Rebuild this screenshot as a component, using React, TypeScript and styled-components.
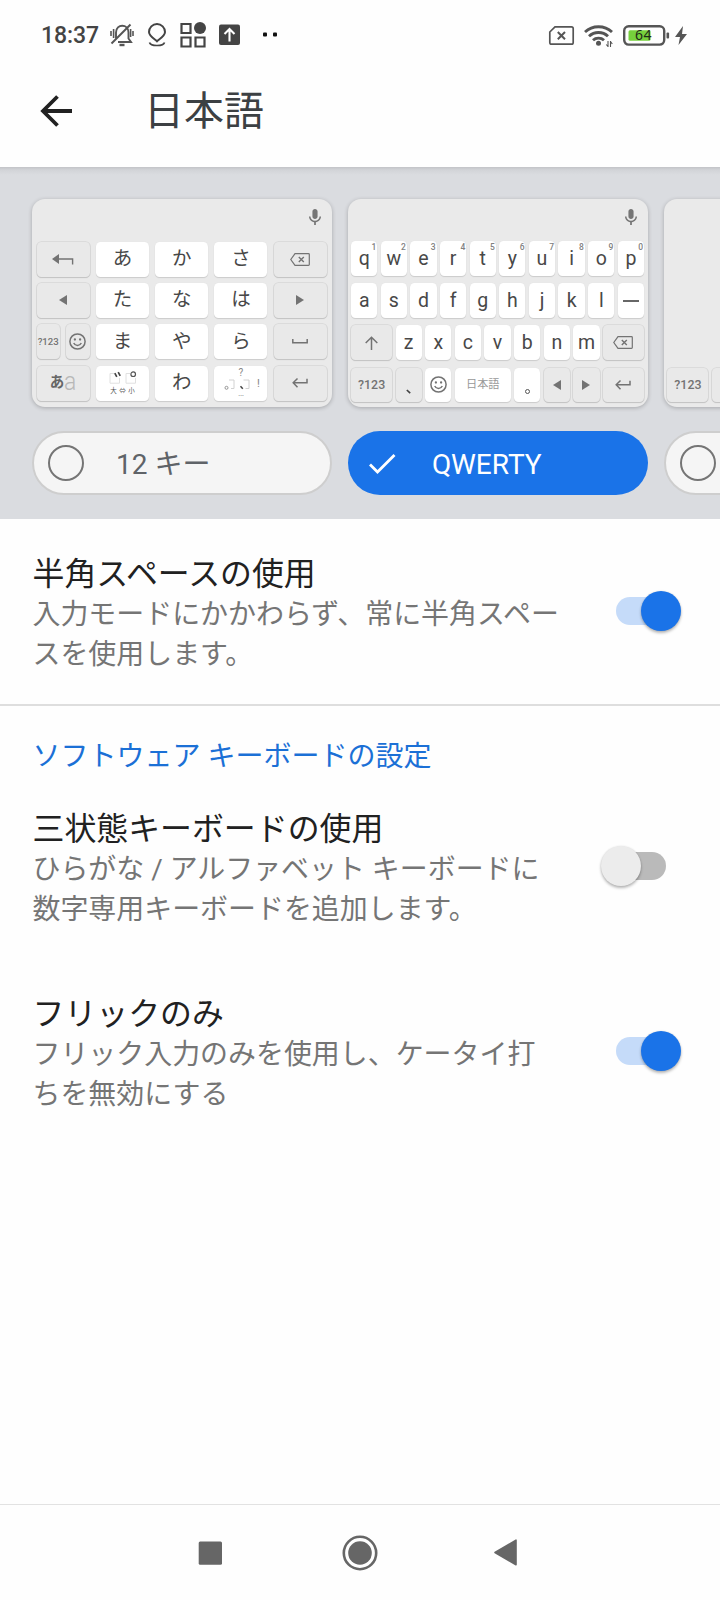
import React from "react";
import styled, { createGlobalStyle, css } from "styled-components";

const Global = createGlobalStyle`
  * { box-sizing: border-box; }
  body { margin: 0; background: #fff; font-family: Roboto, "Noto Sans CJK JP", sans-serif; }
`;

const Screen = styled.div`
  width: 720px;
  height: 1600px;
  background: #fefefe;
  display: flex;
  flex-direction: column;
  overflow: hidden;
`;

const StatusBar = styled.div`
  height: 70px;
  flex: none;
  display: flex;
  justify-content: space-between;
  padding: 0 33px 0 41px;
`;

const StatusGroup = styled.div`
  display: flex;
  align-items: center;
  height: 70px;
`;

const Clock = styled.span`
  width: 69px;
  font-size: 23px;
  line-height: 70px;
  padding-top: 1px;
  font-weight: 500;
  color: #444;
  letter-spacing: -0.1px;
`;

const Header = styled.header`
  height: 97px;
  flex: none;
  display: flex;
  align-items: center;
  padding: 0 0 15px 40px;
  background: #fefefe;
`;

const Title = styled.h1`
  margin: 0 0 0 71px;
  padding-top: 2px;
  font-size: 40px;
  line-height: 56px;
  font-weight: 400;
  color: #3c4043;
`;

const LayoutPanel = styled.section`
  height: 352px;
  flex: none;
  padding: 32px 0 0 32px;
  background: linear-gradient(#c2c3c7 0, #d2d4d8 3px, #dadce0 8px);
  display: flex;
  gap: 16px;
  overflow: hidden;
`;

const LayoutOption = styled.div`
  width: 300px;
  flex: none;
  display: flex;
  flex-direction: column;
  gap: 24px;
`;

const Keyboard = styled.div`
  height: 208px;
  border-radius: 13px;
  background: #eaeaea;
  box-shadow: 0 1px 4px rgba(0, 0, 0, 0.24);
  display: flex;
  flex-direction: column;
`;

const Suggestions = styled.div`
  height: 42px;
  flex: none;
  display: flex;
  justify-content: flex-end;
  padding: 10px 11px 0 0;
`;

const FlickGrid = styled.div`
  display: grid;
  grid-template-columns: repeat(5, 53px);
  grid-auto-rows: 35px;
  gap: 6.4px 6.3px;
  padding: 0.6px 4.6px 0;
`;

const SplitCell = styled.div`
  display: grid;
  grid-template-columns: 1fr 1fr;
  gap: 6.6px;
`;

const QwertyGrid = styled.div`
  display: grid;
  grid-template-columns: repeat(20, 1fr);
  grid-auto-rows: 34.8px;
  row-gap: 7.3px;
  padding: 0.3px 2.3px 0 1.4px;
`;

const Key = styled.div<{ $fn?: boolean; $span?: number; $size?: number; $weight?: number; $color?: string }>`
  position: relative;
  min-width: 0;
  display: flex;
  align-items: center;
  justify-content: center;
  border-radius: 4.5px;
  font-size: ${p => p.$size ?? 19.5}px;
  font-weight: ${p => p.$weight ?? 400};
  line-height: 20px;
  white-space: nowrap;
  color: ${p => p.$color ?? "#484848"};
  ${p => p.$span && css`grid-column: span ${p.$span}; margin: 0 1.7px;`}
  ${p => p.$fn
    ? css`background: #e9e9e9; box-shadow: 0 1px 1px #c3c3c3, 0 0 0 0.8px #d6d6d6;`
    : css`background: #fff; box-shadow: 0 1px 1px #cbcbcb, 0 0 1px #dedede;`}
`;

const Hint = styled.span`
  position: absolute;
  top: 2px;
  right: 1px;
  font-size: 8.5px;
  line-height: 8px;
  font-weight: 500;
  color: #808080;
`;

const Faded = styled.span`
  font-weight: 300;
  font-size: 26px;
  line-height: 20px;
  padding-bottom: 5px;
  transform: scaleX(0.88);
  transform-origin: left;
  margin-right: -2px;
  color: #b8b8b8;
`;

const Pill = styled.div<{ $on?: boolean }>`
  height: 64px;
  border-radius: 32px;
  border: ${p => (p.$on ? "0" : "2px solid #cecece")};
  background: ${p => (p.$on ? "#1a73e8" : "#f5f5f5")};
  color: ${p => (p.$on ? "#fff" : "#5f6368")};
  padding-left: ${p => (p.$on ? 16 : 13)}px;
  display: flex;
  align-items: center;
  font-size: 28px;
`;

const PillLabel = styled.span<{ $gap: number }>`
  margin-left: ${p => p.$gap}px;
  line-height: 40px;
  padding-top: 3px;
`;

const Setting = styled.div<{ $top: number; $height: number; $off?: boolean }>`
  height: ${p => p.$height}px;
  flex: none;
  display: flex;
  justify-content: space-between;
  padding: ${p => p.$top}px ${p => (p.$off ? 54 : 39)}px 0 32.5px;
`;

const SettingText = styled.div`
  display: flex;
  flex-direction: column;
`;

const SettingTitle = styled.div`
  font-size: 31.9px;
  line-height: 38px;
  padding-bottom: 2px;
  color: #212121;
`;

const SettingBody = styled.div`
  font-size: 27.95px;
  line-height: 40px;
  color: #757575;
  white-space: nowrap;
`;

const Switch = styled.div<{ $on?: boolean }>`
  margin: 42px 0 0;
  width: 65px;
  height: 28px;
  flex: none;
  display: flex;
  align-items: center;
  justify-content: ${p => (p.$on ? "flex-end" : "flex-start")};
  border-radius: 14px;
  background: ${p => (p.$on ? "linear-gradient(90deg,#c5dbf9 50px,transparent 50px)" : "linear-gradient(90deg,transparent 15px,#bababa 15px)")};
`;

const Thumb = styled.div<{ $on?: boolean }>`
  width: 40px;
  height: 40px;
  border-radius: 50%;
  background: ${p => (p.$on ? "#1a73e8" : "#ececec")};
  box-shadow: 0 2px 3px rgba(0, 0, 0, 0.28), 0 0 2px rgba(0, 0, 0, 0.1);
`;

const Divider = styled.div`
  height: 2px;
  flex: none;
  background: #dedede;
`;

const SectionTitle = styled.h2`
  height: 72px;
  flex: none;
  margin: 0;
  padding: 31px 0 0 32.5px;
  font-size: 28px;
  line-height: 40px;
  font-weight: 400;
  color: #1b70d6;
`;

const NavBar = styled.nav`
  margin-top: auto;
  height: 96px;
  flex: none;
  border-top: 1px solid #e2e2e2;
  display: flex;
  align-items: center;
  padding: 0 0 0 198px;
`;

const Icon = styled.svg<{ $ml?: number }>`
  display: block;
  flex: none;
  overflow: visible;
  margin-left: ${p => p.$ml ?? 0}px;
`;

const G = "#737373";

const Mic = () => (
  <Icon width="12" height="16" viewBox="5 2 14 19" preserveAspectRatio="none" fill="#757575">
    <path d="M12 14c1.66 0 3-1.34 3-3V5c0-1.66-1.34-3-3-3S9 3.34 9 5v6c0 1.66 1.34 3 3 3zm5.3-3c0 3-2.54 5.1-5.3 5.1S6.7 14 6.7 11H5c0 3.41 2.72 6.23 6 6.72V21h2v-3.28c3.28-.48 6-3.3 6-6.72h-1.7z" />
  </Icon>
);
const Smile = () => (
  <Icon width="17" height="17" viewBox="0 0 17 17" fill="none" stroke={G} strokeWidth="1.5">
    <circle cx="8.5" cy="8.5" r="7.6" />
    <path d="M4.7 10c1.5 3.2 6.1 3.2 7.6 0" />
    <g fill={G} stroke="none"><circle cx="5.9" cy="6.5" r="1.15" /><circle cx="11.1" cy="6.5" r="1.15" /></g>
  </Icon>
);
const Backspace = () => (
  <Icon width="20" height="13" viewBox="0 0 20 13" fill="none" stroke={G} strokeWidth="1.2">
    <path d="M5 .7h13.5q.8 0 .8.8v10q0 .8-.8.8H5L.8 6.5z" />
    <path d="M8.8 4l5 5m0-5l-5 5" strokeWidth="1.4" />
  </Icon>
);
const Enter = () => (
  <Icon width="16" height="10" viewBox="0 0 16 10" fill="none" stroke={G} strokeWidth="1.5">
    <path d="M15 .8v4H1.5M5.5.5L1.2 4.8l4.3 4.4" />
  </Icon>
);
const Undo = () => (
  <Icon width="22" height="11" viewBox="0 0 22 11" fill="none" stroke={G} strokeWidth="1.4">
    <path d="M7 5h13.6v5.5" /><path d="M0 5L7 0v10z" fill={G} stroke="none" />
  </Icon>
);
const Tri = ({ right }: { right?: boolean }) => (
  <Icon width="8" height="10" viewBox="0 0 8 10" fill={G}>
    <path d={right ? "M0 0l8 5-8 5z" : "M8 0L0 5l8 5z"} />
  </Icon>
);
const SpaceMark = () => (
  <Icon width="16" height="5" viewBox="0 0 16 5" fill="none" stroke={G} strokeWidth="1.5">
    <path d="M.8 0v3.8h14.4V0" />
  </Icon>
);
const Shift = () => (
  <Icon width="13" height="14" viewBox="0 0 13 14" fill="none" stroke={G} strokeWidth="1.5">
    <path d="M6.5 14V1.5M.7 7L6.5 1.2 12.3 7" />
  </Icon>
);

const VoicingStack = styled.div`
  display: flex;
  flex-direction: column;
  align-items: center;
  gap: 3px;
`;

const SizeLabel = styled.div`
  display: flex;
  gap: 2.5px;
  font-size: 6.5px;
  line-height: 9px;
  color: #555;
`;

const VoicingKey = () => (
  <VoicingStack>
    <Icon width="27" height="13" viewBox="0 0 27 13" fill="none">
      <path d="M5 2.5H1v9.7h9.5V7M21 2.5h-4v9.7h9.5V7" stroke="#e0e0e0" />
      <path d="M5.8 2.2l2 3.6M9.2 1.2l2 3.6" stroke="#444" strokeWidth="1.7" />
      <circle cx="24.2" cy="3.2" r="2.3" stroke="#555" strokeWidth="1.2" />
    </Icon>
    <SizeLabel><span>大</span><span>⇔</span><span>小</span></SizeLabel>
  </VoicingStack>
);

const PunctStack = styled.div`
  display: flex;
  flex-direction: column;
  align-items: center;
  font-size: 10px;
  line-height: 10px;
  color: #858585;
`;

const PunctRow = styled.div`
  display: flex;
  align-items: center;
  gap: 4px;
  height: 13px;
  padding-left: 2px;
`;

const Bang = styled.span`
  padding-left: 3px;
  font-size: 11px;
`;

const Dots = styled.span`
  font-size: 9px;
  line-height: 5px;
  height: 8px;
`;

const PunctKey = () => (
  <PunctStack>
    <span>?</span>
    <PunctRow>
      <Icon width="11" height="12" viewBox="0 0 11 12" fill="none">
        <path d="M5 2h5v8.5H7" stroke="#d2d2d2" />
        <circle cx="2.5" cy="9.8" r="1.5" stroke="#8a8a8a" strokeWidth=".9" />
      </Icon>
      <Icon width="11" height="12" viewBox="0 0 11 12" fill="none">
        <path d="M4.5 2H10v8.5H6.5" stroke="#d2d2d2" /><path d="M1.5 8.3l2.3 2.5" stroke="#444" strokeWidth="1.5" />
      </Icon>
      <Bang>!</Bang>
    </PunctRow>
    <Dots>…</Dots>
  </PunctStack>
);

const FlickKeyboard = () => (
  <Keyboard>
    <Suggestions><Mic /></Suggestions>
    <FlickGrid>
      <Key $fn><Undo /></Key><Key>あ</Key><Key>か</Key><Key>さ</Key><Key $fn><Backspace /></Key>
      <Key $fn><Tri /></Key><Key>た</Key><Key>な</Key><Key>は</Key><Key $fn><Tri right /></Key>
      <SplitCell>
        <Key $fn $size={9.6} $weight={500} $color={G}>?123</Key>
        <Key $fn><Smile /></Key>
      </SplitCell>
      <Key>ま</Key><Key>や</Key><Key>ら</Key><Key $fn><SpaceMark /></Key>
      <Key $fn $size={14.5} $weight={700} $color="#666">あ<Faded>a</Faded></Key>
      <Key><VoicingKey /></Key><Key>わ</Key><Key><PunctKey /></Key><Key $fn><Enter /></Key>
    </FlickGrid>
  </Keyboard>
);

const QwertyKeyboard = () => (
  <Keyboard>
    <Suggestions><Mic /></Suggestions>
    <QwertyGrid>
      {"qwertyuiop".split("").map((c, i) => (
        <Key $span={2} key={c}>{c}<Hint>{(i + 1) % 10}</Hint></Key>
      ))}
      {"asdfghjkl".split("").map(c => <Key $span={2} key={c}>{c}</Key>)}
      <Key $span={2}>
        <Icon width="16" height="2" viewBox="0 0 16 2"><rect width="16" height="1.6" y=".2" fill="#424242" /></Icon>
      </Key>
      <Key $fn $span={3}><Shift /></Key>
      {"zxcvbnm".split("").map(c => <Key $span={2} key={c}>{c}</Key>)}
      <Key $fn $span={3}><Backspace /></Key>
      <Key $fn $span={3} $size={12.4} $weight={500} $color={G}>?123</Key>
      <Key $fn $span={2}>
        <Icon width="5" height="18" viewBox="0 0 5 18"><path d="M.8 14l3.4 3.2" stroke="#424242" strokeWidth="1.6" /></Icon>
      </Key>
      <Key $span={2}><Smile /></Key>
      <Key $span={4} $size={11.2} $color="#999">日本語</Key>
      <Key $span={2}>
        <Icon width="5" height="18" viewBox="0 0 5 18" fill="none"><circle cx="2.5" cy="15.5" r="2" stroke="#555" /></Icon>
      </Key>
      <Key $fn $span={2}><Tri /></Key>
      <Key $fn $span={2}><Tri right /></Key>
      <Key $fn $span={3}><Enter /></Key>
    </QwertyGrid>
  </Keyboard>
);

const BottomKeys = styled.div`
  margin-top: auto;
  height: 39.5px;
  display: grid;
  grid-template-columns: repeat(20, 1fr);
  grid-auto-rows: 34.8px;
  padding: 0 1.7px;
`;

const Radio = () => (
  <Icon width="38" height="38" viewBox="0 0 38 38" fill="none">
    <circle cx="19" cy="19" r="17" stroke="#757575" strokeWidth="2" />
  </Icon>
);

export default function App() {
  return (
    <>
      <Global />
      <Screen>
        <StatusBar>
          <StatusGroup>
            <Clock>18:37</Clock>
            <Icon width="24" height="24" viewBox="0 0 24 24" fill="none" stroke="#555" strokeWidth="1.9">
              <path d="M6 15.5V9.5c0-9 12.500-9 12.500 0v6l2.500 3.500H8" />
              <path d="M1.5 20.5L20.5 1.5" strokeWidth="2" />
              <path d="M9.5 22h5" strokeWidth="2.4" />
              <path d="M1 8v5M3.6 6v9M23 8v5M20.6 6v8" strokeWidth="1.6" />
            </Icon>
            <Icon width="18" height="24" viewBox="0 0 18 24" fill="none" stroke="#444" strokeWidth="2" $ml={14}>
              <path d="M9 18.3C6.5 16 1 13 1 9a8 8 0 0 1 16 0c0 4-5.5 7-8 9.3z" />
              <path d="M1.5 19.5c1 4 14 4 15 0" strokeWidth="1.7" />
            </Icon>
            <Icon width="26" height="26" viewBox="0 0 26 26" fill="none" stroke="#444" strokeWidth="2.2" $ml={14}>
              <path d="M1.5 2h9v9h-9zM1.5 15.5h9v9h-9zM15.5 15.5h9v9h-9z" />
              <circle cx="20" cy="6" r="6" fill="#444" stroke="none" />
            </Icon>
            <Icon width="21" height="21" viewBox="0 0 21 21" $ml={12.5}>
              <rect width="21" height="20.5" y="-.5" rx="2" fill="#444" />
              <path d="M10.5 16.5V4.500M5.500 9l5-5 5 5" stroke="#fff" strokeWidth="2.1" fill="none" />
            </Icon>
            <Icon width="16" height="4" viewBox="0 0 16 4" $ml={22}>
              <rect x="1" y="-.5" width="4" height="4" rx="1" fill="#111" /><rect x="11" y="-.5" width="4" height="4" rx="1" fill="#111" />
            </Icon>
          </StatusGroup>
          <StatusGroup>
            <Icon width="25" height="19" viewBox="0 0 25 19" fill="none" stroke="#555" strokeWidth="1.7">
              <path d="M6 .8h16.5q1.7 0 1.7 1.7v14q0 1.7-1.7 1.7h-20Q.8 18.2.8 16.5V6z" />
              <path d="M8.8 6l7.2 7.2M16 6l-7.2 7.2" strokeWidth="2" />
            </Icon>
            <Icon width="29" height="23" viewBox="0 0 29 23" fill="none" stroke="#555" strokeWidth="2.9" $ml={10}>
              <path d="M1 8c7.5-7 19.5-7 27 0" /><path d="M5 12.2c5.4-5 13.6-5 19 0" /><path d="M9 16.2c3-2.8 8-2.8 11 0" />
              <circle cx="14.5" cy="19.3" r="2.5" fill="#555" stroke="none" />
              <path d="M24 17v6M26.5 17v6M22.2 20.5l1.8 2M28.3 20l-1.8-2.5" strokeWidth="1.1" />
            </Icon>
            <Icon width="47" height="21" viewBox="0 0 47 21" $ml={10}>
              <rect x="1.2" y="1.2" width="40" height="18.4" rx="4.5" fill="none" stroke="#555" strokeWidth="2.4" />
              <rect x="5.5" y="5.2" width="22" height="10.5" rx="1.5" fill="#76d13c" />
              <rect x="43.5" y="7.5" width="2.6" height="6" rx="1" fill="#555" />
              <text x="20.3" y="15.4" textAnchor="middle" fontSize="14" fontFamily="'Noto Sans', sans-serif" textLength="16.5" fill="#1f2b18">64</text>
            </Icon>
            <Icon width="12" height="19" viewBox="0 0 12 19" $ml={5}>
              <path d="M8 0L0 11h5L3.5 19 12 8H7z" fill="#555" />
            </Icon>
          </StatusGroup>
        </StatusBar>
        <Header>
          <Icon width="33" height="32" viewBox="0 0 33 32" fill="none" stroke="#212121" strokeWidth="3.8">
            <path d="M32 16H3M17.5 1.5L3 16l14.500 14.500" />
          </Icon>
          <Title>日本語</Title>
        </Header>
        <LayoutPanel>
          <LayoutOption>
            <FlickKeyboard />
            <Pill><Radio /><PillLabel $gap={31}>12 キー</PillLabel></Pill>
          </LayoutOption>
          <LayoutOption>
            <QwertyKeyboard />
            <Pill $on>
              <Icon width="36" height="36" viewBox="0 0 36 36" fill="none" stroke="#fff" strokeWidth="2.8">
                <path d="M6 19.5l7.5 7.5L30.500 10" />
              </Icon>
              <PillLabel $gap={32}>QWERTY</PillLabel>
            </Pill>
          </LayoutOption>
          <LayoutOption>
            <Keyboard>
              <BottomKeys>
                <Key $fn $span={3} $size={12.4} $weight={500} $color={G}>?123</Key>
                <Key $fn $span={2} />
              </BottomKeys>
            </Keyboard>
            <Pill><Radio /></Pill>
          </LayoutOption>
        </LayoutPanel>
        <Setting $top={36} $height={185}>
          <SettingText>
            <SettingTitle>半角スペースの使用</SettingTitle>
            <SettingBody>入力モードにかかわらず、常に半角スペー<br />スを使用します。</SettingBody>
          </SettingText>
          <Switch $on><Thumb $on /></Switch>
        </Setting>
        <Divider />
        <SectionTitle>ソフトウェア キーボードの設定</SectionTitle>
        <Setting $top={32} $height={185} $off>
          <SettingText>
            <SettingTitle>三状態キーボードの使用</SettingTitle>
            <SettingBody>ひらがな / アルファベット キーボードに<br />数字専用キーボードを追加します。</SettingBody>
          </SettingText>
          <Switch><Thumb /></Switch>
        </Setting>
        <Setting $top={32} $height={185}>
          <SettingText>
            <SettingTitle>フリックのみ</SettingTitle>
            <SettingBody>フリック入力のみを使用し、ケータイ打<br />ちを無効にする</SettingBody>
          </SettingText>
          <Switch $on><Thumb $on /></Switch>
        </Setting>
        <NavBar>
          <Icon width="24" height="24" viewBox="0 0 24 24"><rect x=".7" y=".5" width="23.3" height="23.3" rx="1.5" fill="#666" /></Icon>
          <Icon width="36" height="36" viewBox="0 0 36 36" $ml={119.6}>
            <circle cx="18" cy="18" r="16.2" fill="none" stroke="#666" strokeWidth="2.6" /><circle cx="18" cy="18" r="11.8" fill="#666" />
          </Icon>
          <Icon width="23" height="27" viewBox="0 0 23 27" $ml={116.8}>
            <path d="M1 13.5L22 1.2v24.6z" fill="#666" stroke="#666" strokeWidth="1.6" strokeLinejoin="round" />
          </Icon>
        </NavBar>
      </Screen>
    </>
  );
}
